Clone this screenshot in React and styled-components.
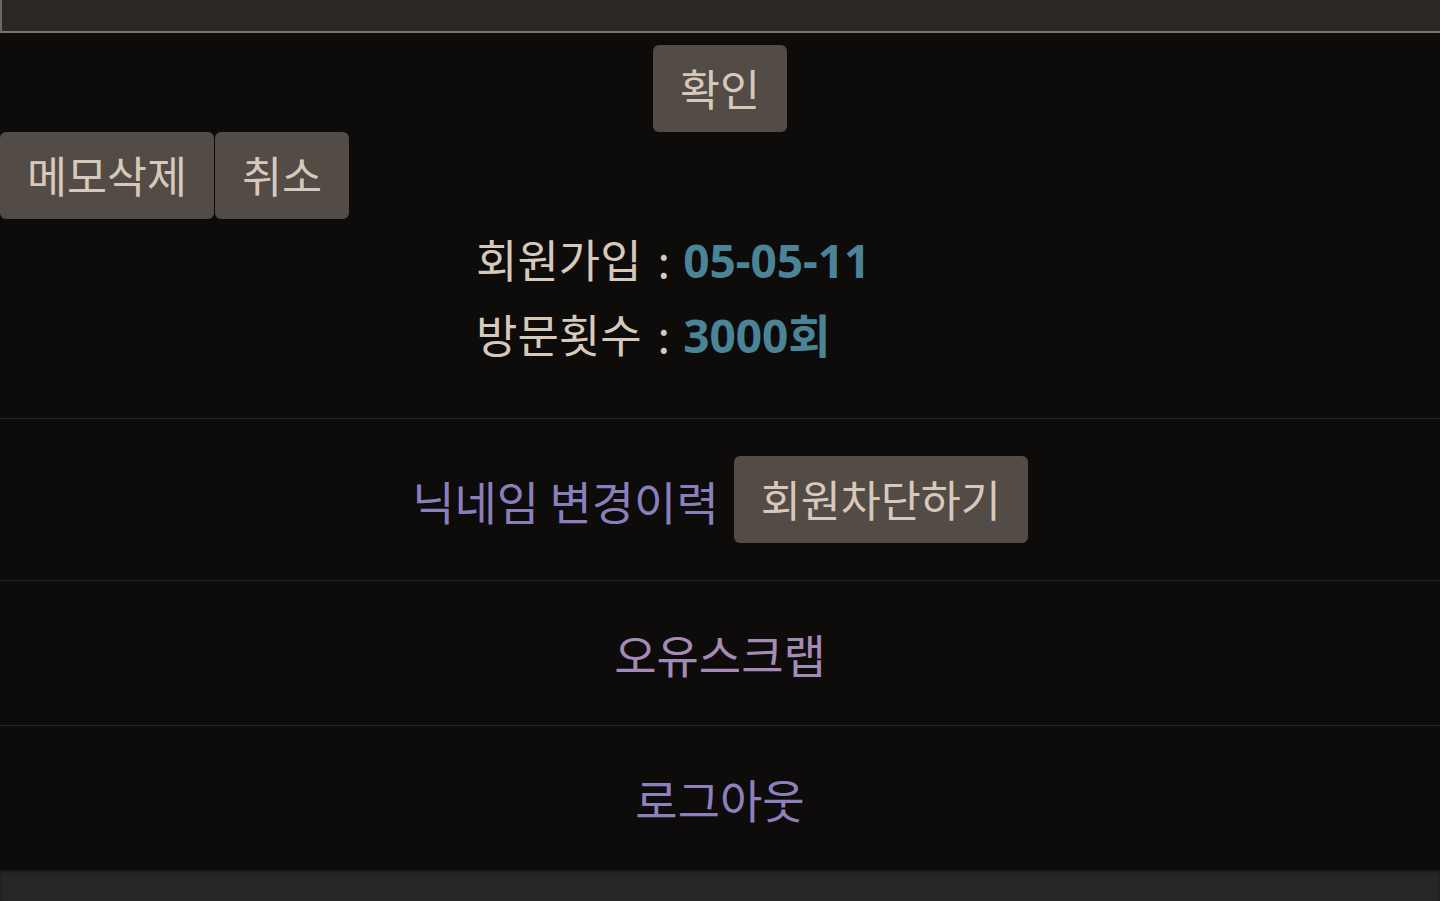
import styled, { createGlobalStyle } from "styled-components"

const GlobalStyle = createGlobalStyle`
  html, body {
    margin: 0;
    padding: 0;
    background: #0d0c0b;
  }
  body {
    font-family: "Noto Sans CJK KR", "Noto Sans", sans-serif;
    color: #d6c9bb;
  }
`

const Page = styled.div`
  display: flex;
  flex-direction: column;
  min-height: 901px;
  background: #0d0c0b;
`

const MemoBox = styled.div`
  height: 31px;
  background: #2c2724;
  border-left: 2px solid #6f665e;
  border-bottom: 2px solid #7c736a;
`

const ConfirmRow = styled.div`
  display: flex;
  justify-content: center;
  padding-top: 12px;
`

const ActionRow = styled.div`
  display: flex;
  gap: 1px;
`

const Button = styled.button`
  box-sizing: border-box;
  height: 87px;
  font-family: "Noto Sans CJK KR", "Noto Sans", sans-serif;
  font-size: 43.5px;
  line-height: 58px;
  padding: 0 27px 2px;
  border: 0;
  border-radius: 6px;
  background: #534b45;
  color: #d6c9bb;
  cursor: pointer;
  white-space: nowrap;
`

const Info = styled.div`
  box-sizing: border-box;
  padding: 3px 0 46px 476px;
  font-size: 45px;
  line-height: 73px;
  border-bottom: 1px solid #262422;
`

const InfoLine = styled.div`
  white-space: nowrap;
  color: #d6c9bb;
`

const Colon = styled.span`
  margin: 0 13px 0 16px;
`

const Value = styled.span`
  color: #4a8496;
  font-weight: 700;
  font-size: 46px;
  font-family: "Noto Sans", "Noto Sans CJK KR", sans-serif;
`

const MenuRow = styled.div`
  display: flex;
  justify-content: center;
  align-items: center;
  gap: 15px;
  padding: ${({ $pad }) => $pad}px 0;
  border-bottom: ${({ $last }) => ($last ? "none" : "1px solid #262422")};
`

const MenuLink = styled.a`
  font-size: 46px;
  line-height: 58px;
  color: ${({ $color }) => $color};
  text-decoration: none;
  cursor: pointer;
`

const BottomBar = styled.div`
  flex: 1;
  background: #272625;
  box-shadow: inset 0 2px 2px rgba(0, 0, 0, 0.35);
`

export default function App() {
  return (
    <>
      <GlobalStyle />
      <Page>
        <MemoBox />
        <ConfirmRow>
          <Button>확인</Button>
        </ConfirmRow>
        <ActionRow>
          <Button>메모삭제</Button>
          <Button>취소</Button>
        </ActionRow>
        <Info>
          <InfoLine>
            회원가입<Colon>:</Colon><Value>05-05-11</Value>
          </InfoLine>
          <InfoLine>
            방문횟수<Colon>:</Colon><Value>3000회</Value>
          </InfoLine>
        </Info>
        <MenuRow $pad={37}>
          <MenuLink $color="#8a7fbb">닉네임 변경이력</MenuLink>
          <Button>회원차단하기</Button>
        </MenuRow>
        <MenuRow $pad={43}>
          <MenuLink $color="#a58ab5">오유스크랩</MenuLink>
        </MenuRow>
        <MenuRow $pad={43} $last>
          <MenuLink $color="#8d80bd">로그아웃</MenuLink>
        </MenuRow>
        <BottomBar />
      </Page>
    </>
  )
}
